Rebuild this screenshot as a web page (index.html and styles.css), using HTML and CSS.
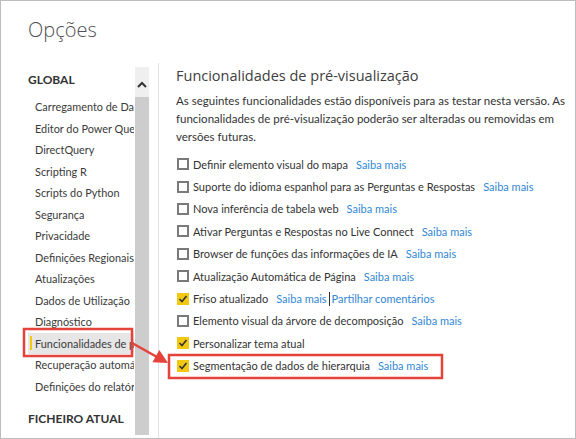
FILE: index.html
```html
<!DOCTYPE html>
<html lang="pt">
<head>
<meta charset="utf-8">
<link rel="stylesheet" href="styles.css">
</head>
<body>
<div class="window">
  <h1 class="title">Opções</h1>
  <div class="main">
    <div class="sidebar">
      <div class="nav">
        <div class="section">GLOBAL</div>
        <ul class="items">
          <li>Carregamento de Dados</li>
          <li>Editor do Power Query</li>
          <li>DirectQuery</li>
          <li>Scripting R</li>
          <li>Scripts do Python</li>
          <li>Segurança</li>
          <li>Privacidade</li>
          <li>Definições Regionais</li>
          <li>Atualizações</li>
          <li>Dados de Utilização</li>
          <li>Diagnóstico</li>
          <li class="active">Funcionalidades de pré-visualização</li>
          <li>Recuperação automática</li>
          <li>Definições do relatório</li>
        </ul>
        <div class="section section-file">FICHEIRO ATUAL</div>
      </div>
      <div class="scrollbar">
        <div class="scroll-up">
          <svg width="14" height="10" viewBox="0 0 14 10"><polyline points="3,7 7,3 11,7" fill="none" stroke="#333" stroke-width="2"/></svg>
        </div>
        <div class="scroll-thumb"></div>
      </div>
    </div>
    <div class="content">
      <h2 class="heading">Funcionalidades de pré-visualização</h2>
      <p class="desc">As seguintes funcionalidades estão disponíveis para as testar nesta versão. As funcionalidades de pré-visualização poderão ser alteradas ou removidas em versões futuras.</p>
      <ul class="features">
        <li><span class="cb"></span><span class="label">Definir elemento visual do mapa</span><a class="link">Saiba mais</a></li>
        <li><span class="cb"></span><span class="label">Suporte do idioma espanhol para as Perguntas e Respostas</span><a class="link">Saiba mais</a></li>
        <li><span class="cb"></span><span class="label">Nova inferência de tabela web</span><a class="link">Saiba mais</a></li>
        <li><span class="cb"></span><span class="label">Ativar Perguntas e Respostas no Live Connect</span><a class="link">Saiba mais</a></li>
        <li><span class="cb"></span><span class="label">Browser de funções das informações de IA</span><a class="link">Saiba mais</a></li>
        <li><span class="cb"></span><span class="label">Atualização Automática de Página</span><a class="link">Saiba mais</a></li>
        <li><span class="cb checked"><svg width="12" height="12" viewBox="0 0 12 12"><polyline points="2.5,6 5,8.5 9.5,3" fill="none" stroke="#333" stroke-width="1.6"/></svg></span><span class="label">Friso atualizado</span><a class="link">Saiba mais</a><span class="sep"></span><a class="link link-tight">Partilhar comentários</a></li>
        <li><span class="cb"></span><span class="label">Elemento visual da árvore de decomposição</span><a class="link">Saiba mais</a></li>
        <li><span class="cb checked"><svg width="12" height="12" viewBox="0 0 12 12"><polyline points="2.5,6 5,8.5 9.5,3" fill="none" stroke="#333" stroke-width="1.6"/></svg></span><span class="label">Personalizar tema atual</span></li>
        <li><span class="cb checked"><svg width="12" height="12" viewBox="0 0 12 12"><polyline points="2.5,6 5,8.5 9.5,3" fill="none" stroke="#333" stroke-width="1.6"/></svg></span><span class="label">Segmentação de dados de hierarquia</span><a class="link">Saiba mais</a></li>
      </ul>
    </div>
  </div>
  <svg class="annotation" width="576" height="439" viewBox="0 0 576 439">
    <rect x="24" y="329" width="108" height="27" fill="none" stroke="#e5423b" stroke-width="2.5"/>
    <rect x="169" y="355" width="273" height="23" fill="none" stroke="#e5423b" stroke-width="2.5"/>
    <line x1="132" y1="343" x2="157" y2="357" stroke="#e5423b" stroke-width="2.5"/>
    <polygon points="168,363 152.4,362.2 159.3,350" fill="#e5423b"/>
  </svg>
</div>
</body>
</html>
```

FILE: styles.css
```css
* { box-sizing: border-box; }
html, body { margin: 0; padding: 0; background: #fff; }
body { font-family: Lato, "Open Sans", sans-serif; color: #333; }

.window {
  position: relative;
  width: 576px;
  height: 439px;
  border: 1px solid #bdbdbd;
  overflow: hidden;
  background: #fff;
}

.title {
  margin: 13px 0 0 27px;
  font-family: "Open Sans", sans-serif;
  font-weight: 300;
  font-size: 20px;
  line-height: 32px;
  color: #505050;
}

.main {
  display: flex;
  margin-top: 17px;
  height: 376px;
}

.sidebar {
  display: flex;
  width: 158px;
  padding-left: 27px;
  padding-right: 9px;
  border-right: 1px solid #e3e3e3;
}

.nav {
  width: 106px;
  overflow: hidden;
  padding-top: 7px;
}

.section {
  font-weight: 700;
  font-size: 12px;
  line-height: 20px;
  color: #333;
}

.section-file { margin-top: 12px; }

.items {
  list-style: none;
  margin: 6px 0 0 0;
  padding: 0;
}

.items li {
  position: relative;
  font-size: 10.9px;
  line-height: 21.5px;
  height: 21.5px;
  padding-left: 7px;
  white-space: nowrap;
  color: #3a3a3a;
}

.items li.active { background: #e6e6e6; }
.items li.active::before {
  content: "";
  position: absolute;
  left: 2px;
  top: 3px;
  width: 2px;
  height: 14px;
  background: #f2c811;
}

.scrollbar {
  width: 14px;
  margin-left: 1px;
  margin-top: 4px;
  display: flex;
  flex-direction: column;
  height: 368px;
}

.scroll-up {
  height: 30px;
  background: #efefef;
  display: flex;
  align-items: center;
  justify-content: center;
  padding-top: 6px;
}

.scroll-thumb {
  flex: 1;
  background: #cdcdcd;
}

.content {
  flex: 1;
  padding: 3px 0 0 17px;
}

.heading {
  margin: 0;
  font-family: "Open Sans", sans-serif;
  font-weight: 400;
  font-size: 14.5px;
  line-height: 20px;
  color: #404040;
}

.desc {
  margin: 6px 0 0 0;
  font-size: 11.5px;
  line-height: 18px;
  color: #333;
  width: 395px;
}

.features {
  list-style: none;
  margin: 7px 0 0 0;
  padding: 0;
}

.features li {
  display: flex;
  align-items: center;
  height: 22.4px;
  font-size: 11px;
  color: #333;
  white-space: nowrap;
}

.cb {
  width: 12px;
  height: 12px;
  border: 2px solid #7a7a7a;
  margin: 0 4px 0 1px;
  flex: none;
}

.cb.checked {
  border: none;
  background: #f2c811;
  display: flex;
}

.link {
  color: #3088d6;
  margin-left: 8px;
}

.link-tight { margin-left: 2px; }

.sep {
  width: 1px;
  height: 14px;
  background: #333;
  margin-left: 2px;
}

.annotation {
  position: absolute;
  left: -1px;
  top: -1px;
  pointer-events: none;
}
```
